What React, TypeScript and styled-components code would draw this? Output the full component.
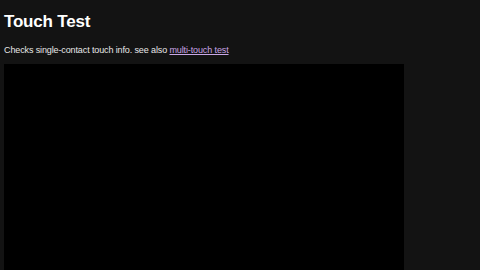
import React from "react";
import styled, { createGlobalStyle } from "styled-components";

const Global = createGlobalStyle`
  html, body { margin: 0; padding: 0; background: #131313; }
  body { font-family: "Liberation Sans", Arial, sans-serif; color: #ffffff; overflow: hidden; }
`;

const Page = styled.div`
  padding: 0 4px;
  display: flex;
  flex-direction: column;
  height: 270px;
`;

const Title = styled.h1`
  margin: 12px 0 0;
  font-size: 17px;
  line-height: 20px;
  font-weight: 700;
  letter-spacing: -0.2px;
`;

const Intro = styled.p`
  margin: 12px 0 0;
  font-size: 9px;
  line-height: 12px;
  letter-spacing: -0.12px;
  color: #e8e8e8;
`;

const Link = styled.a`
  color: #c9a6e6;
  text-decoration: underline;
`;

const Canvas = styled.div`
  margin-top: 8px;
  width: 400px;
  flex: 1;
  background: #000000;
`;

export default function App() {
  return (
    <>
      <Global />
      <Page>
        <Title>Touch Test</Title>
        <Intro>
          Checks single-contact touch info. see also <Link href="#">multi-touch test</Link>
        </Intro>
        <Canvas />
      </Page>
    </>
  );
}
